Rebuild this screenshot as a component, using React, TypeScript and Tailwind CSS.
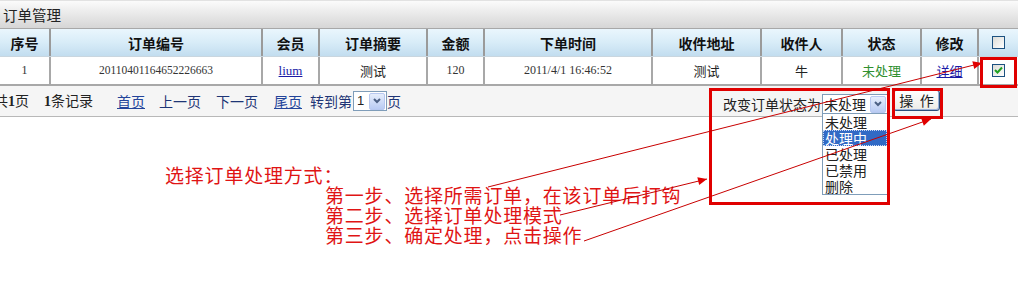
import React from 'react'

const cjk = "font-['Noto_Sans_CJK_SC',sans-serif]"
const serif = "font-['Liberation_Serif','Noto_Sans_CJK_SC',serif]"

const headers = ['序号', '订单编号', '会员', '订单摘要', '金额', '下单时间', '收件地址', '收件人', '状态', '修改']

// red guide lines from the notes to the controls
const guides = [
  { x1: 488, y1: 187, x2: 982, y2: 63 },
  { x1: 560, y1: 215, x2: 707, y2: 179 },
  { x1: 584, y1: 241, x2: 931, y2: 119 },
]

function arrowHead(g: { x1: number; y1: number; x2: number; y2: number }) {
  const dx = g.x2 - g.x1
  const dy = g.y2 - g.y1
  const len = Math.hypot(dx, dy)
  const ux = dx / len
  const uy = dy / len
  const bx = g.x2 - ux * 9
  const by = g.y2 - uy * 9
  return `${g.x2},${g.y2} ${bx - uy * 4},${by + ux * 4} ${bx + uy * 4},${by - ux * 4}`
}

function CheckBox({ checked }: { checked?: boolean }) {
  return (
    <span className="flex h-[13px] w-[13px] items-center justify-center border border-[#1c5180] bg-linear-to-br from-[#dcdcd7] to-white">
      {checked && (
        <svg width="9" height="9" viewBox="0 0 9 9">
          <path d="M1 4 L3.5 6.5 L8 1.5" fill="none" stroke="#21a121" strokeWidth="2" />
        </svg>
      )}
    </span>
  )
}

function SelectArrow() {
  return (
    <span className="flex h-[17px] w-[16px] items-center justify-center rounded-[2px] border border-[#b7c8f0] bg-linear-to-b from-[#e6eefc] to-[#b9cbf3]">
      <svg width="8" height="6" viewBox="0 0 8 6">
        <path d="M1 1 L4 4 L7 1" fill="none" stroke="#4d6185" strokeWidth="2" />
      </svg>
    </span>
  )
}

export default function App() {
  return (
    <div className={`relative h-[301px] w-[1018px] overflow-hidden bg-white text-[#222] ${cjk}`}>
      {/* Title bar */}
      <div className="flex h-[29px] items-center border-t border-b border-t-[#e2e2e2] border-b-[#a8a8a8] bg-linear-to-b from-[#fbfbfb] to-[#d6d6d6] pl-[3px] text-[14.5px] leading-[16px]">
        订单管理
      </div>

      {/* Header row */}
      <div className="grid h-[28px] grid-cols-[51px_212px_57px_108px_57px_168px_109px_81px_79px_57px_39px] border-b border-[#c9d6df] bg-linear-to-b from-[#eaf6fd] via-[#d8ecf8] to-[#c2ddef] text-[14px] font-bold leading-[16px] text-[#111]">
        {headers.map((h) => (
          <div key={h} className="flex items-center justify-center border-r-2 border-[#9a9a9a]">
            {h}
          </div>
        ))}
        <div className="flex items-center justify-center">
          <CheckBox />
        </div>
      </div>

      {/* Data row */}
      <div className="grid h-[29px] grid-cols-[51px_212px_57px_108px_57px_168px_109px_81px_79px_57px_39px] border-b-2 border-[#a8a8a8] text-[13px] leading-[15px]">
        <div className={`flex items-center justify-center border-r-2 border-[#a8a8a8] text-[12px] text-[#333] ${serif}`}>1</div>
        <div className={`flex items-center justify-center border-r-2 border-[#a8a8a8] text-[11.5px] text-[#333] ${serif}`}>20110401164652226663</div>
        <div className={`flex items-center justify-center border-r-2 border-[#a8a8a8] text-[13px] text-[#1a1aa6] underline ${serif}`}>lium</div>
        <div className="flex items-center justify-center border-r-2 border-[#a8a8a8]">测试</div>
        <div className={`flex items-center justify-center border-r-2 border-[#a8a8a8] text-[12px] text-[#333] ${serif}`}>120</div>
        <div className={`flex items-center justify-center border-r-2 border-[#a8a8a8] text-[12px] text-[#333] ${serif}`}>2011/4/1 16:46:52</div>
        <div className="flex items-center justify-center border-r-2 border-[#a8a8a8]">测试</div>
        <div className="flex items-center justify-center border-r-2 border-[#a8a8a8]">牛</div>
        <div className="flex items-center justify-center border-r-2 border-[#a8a8a8] text-[#2f8f2f]">未处理</div>
        <div className="flex items-center justify-center border-r-2 border-[#a8a8a8] text-[#1a1aa6] underline">详细</div>
        <div className="flex items-center justify-center">
          <CheckBox checked />
        </div>
      </div>

      {/* Pagination + status change */}
      <div className="flex h-[31px] items-center border-b border-[#b8b8b8] bg-[#f5f5f5] text-[14px] leading-[16px]">
        <div className="ml-[-6px] flex items-center">
          <span>共<b className={serif}>1</b>页</span>
          <span className="ml-[15px]"><b className={serif}>1</b>条记录</span>
          <span className="ml-[24px] text-[#23449a] underline">首页</span>
          <span className="ml-[14px] text-[#1e3576]">上一页</span>
          <span className="ml-[15px] text-[#1e3576]">下一页</span>
          <span className="ml-[16px] text-[#23449a] underline">尾页</span>
          <span className="ml-[8px] text-[#1e3576]">转到第</span>
          <span className="ml-[1px] flex h-[20px] w-[34px] items-center justify-between border border-[#7f9db9] bg-white pl-[3px] pr-[1px]">
            <span className="font-['Liberation_Sans',sans-serif] text-[13px]">1</span>
            <SelectArrow />
          </span>
          <span className="text-[#1e3576]">页</span>
        </div>

        <div className="ml-auto mr-[78px] flex items-center">
          <span className="mt-[5px]">改变订单状态为</span>
          <span className="ml-[1px] mt-[6px] flex h-[20px] w-[66px] items-center justify-between border border-[#7f9db9] bg-white pl-[1px] pr-[1px]">
            <span>未处理</span>
            <SelectArrow />
          </span>
          <button className="ml-[5px] mb-[2px] flex h-[21px] w-[47px] items-center justify-center rounded-[3px] border border-[#2c4f7c] bg-linear-to-b from-white to-[#ecebe6] shadow-[inset_-1px_-1px_0_#9bb1d9] text-[14px] leading-[16px]">
            操&nbsp;&nbsp;作
          </button>
        </div>
      </div>

      {/* Notes */}
      <div className="mt-[48px] pl-[165px] text-[19px] leading-[20px] tracking-[0.8px] text-[#e01414]">
        <div>选择订单处理方式：</div>
        <div className="pl-[160px]">
          <div>第一步、选择所需订单，在该订单后打钩</div>
          <div>第二步、选择订单处理模式</div>
          <div>第三步、确定处理，点击操作</div>
        </div>
      </div>

      {/* Open dropdown list */}
      <div className="absolute left-[822px] top-[113px] w-[66px] border border-[#7f9db9] bg-white text-[14px] leading-[16px]">
        <div className="h-[16px] pl-[2px]">未处理</div>
        <div className="h-[16px] border border-dotted border-[#c9d8f5] bg-[#316ac5] pl-[1px] leading-[14px] text-white">处理中</div>
        <div className="h-[16px] pl-[2px]">已处理</div>
        <div className="h-[16px] pl-[2px]">已禁用</div>
        <div className="h-[16px] pl-[2px]">删除</div>
      </div>

      {/* Red highlight boxes */}
      <div className="absolute left-[980px] top-[57px] h-[31px] w-[37px] border-[3px] border-[#e00000]" />
      <div className="absolute left-[709px] top-[88px] h-[117px] w-[181px] border-[3px] border-[#e00000]" />
      <div className="absolute left-[892px] top-[88px] h-[31px] w-[51px] border-[3px] border-[#e00000]" />

      {/* Guide lines */}
      <svg className="pointer-events-none absolute left-0 top-0" width="1018" height="301">
        {guides.map((g, i) => (
          <g key={i}>
            <line x1={g.x1} y1={g.y1} x2={g.x2} y2={g.y2} stroke="#c80000" strokeWidth="1" />
            <polygon points={arrowHead(g)} fill="#e00000" />
          </g>
        ))}
      </svg>
    </div>
  )
}
